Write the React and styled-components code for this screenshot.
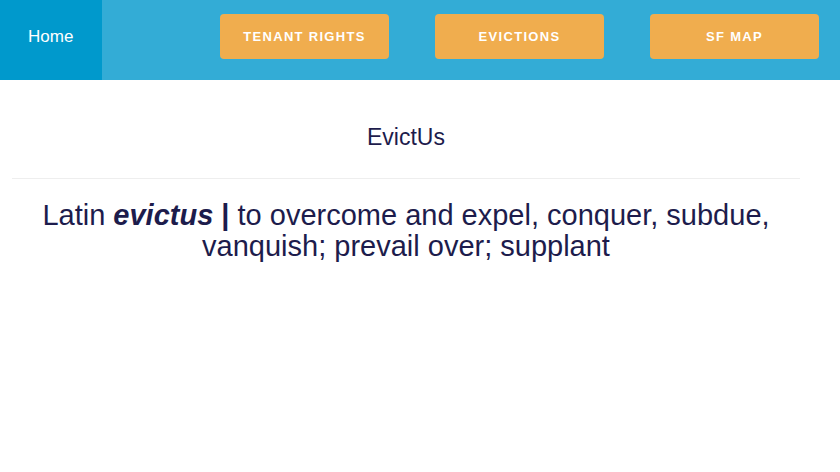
import React from "react";
import styled, { createGlobalStyle } from "styled-components";

const GlobalStyle = createGlobalStyle`
  body {
    margin: 0;
    font-family: "Liberation Sans", Arial, sans-serif;
    background: #ffffff;
    color: #1d1c4c;
  }
`;

const NavBar = styled.nav`
  display: flex;
  align-items: flex-start;
  height: 80px;
  background: #33acd6;
`;

const HomeLink = styled.a`
  display: flex;
  align-items: center;
  align-self: stretch;
  padding: 0 29px 6px 28px;
  background: #0099cc;
  color: #ffffff;
  font-size: 17px;
  text-decoration: none;
`;

const NavButtons = styled.div`
  display: flex;
  gap: 46px;
  margin: 14px 21px 0 auto;
`;

const NavButton = styled.a`
  display: flex;
  align-items: center;
  justify-content: center;
  width: 169px;
  height: 45px;
  border-radius: 4px;
  background: #f0ad4e;
  color: #ffffff;
  font-size: 13px;
  font-weight: 700;
  letter-spacing: 1.3px;
  text-transform: uppercase;
  text-decoration: none;
`;

const Content = styled.main`
  width: 788px;
  margin: 0 12px;
  text-align: center;
`;

const Title = styled.h1`
  margin: 0;
  padding: 43px 0 27px;
  font-size: 23px;
  font-weight: 400;
  line-height: 28px;
  border-bottom: 1px solid #eeeeee;
`;

const Definition = styled.p`
  margin: 21px 0 0;
  font-size: 29px;
  line-height: 31px;
`;

export default function App() {
  return (
    <>
      <GlobalStyle />
      <NavBar>
        <HomeLink href="#">Home</HomeLink>
        <NavButtons>
          <NavButton href="#">Tenant Rights</NavButton>
          <NavButton href="#">Evictions</NavButton>
          <NavButton href="#">SF Map</NavButton>
        </NavButtons>
      </NavBar>
      <Content>
        <Title>EvictUs</Title>
        <Definition>
          Latin <b><i>evictus</i> |</b> to overcome and expel, conquer, subdue,
          vanquish; prevail over; supplant
        </Definition>
      </Content>
    </>
  );
}
